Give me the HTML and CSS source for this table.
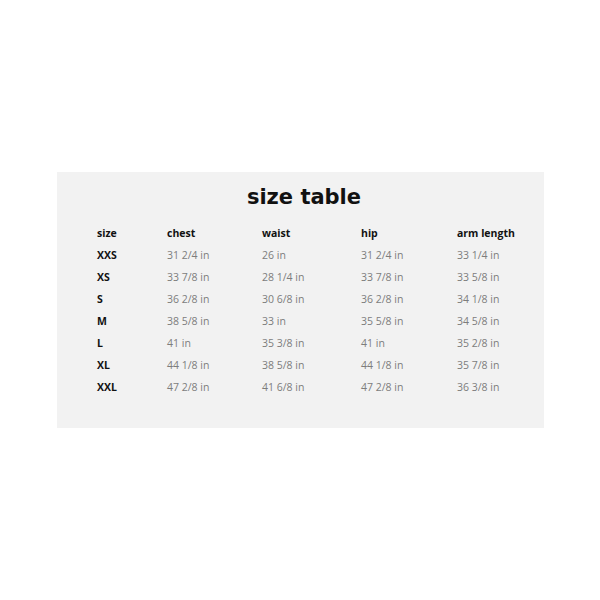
FILE: index.html
```html
<!DOCTYPE html>
<html>
<head>
<meta charset="utf-8">
<link rel="stylesheet" href="styles.css">
</head>
<body>
<section class="panel">
  <h1 class="title">size table</h1>
  <table class="sizes">
    <colgroup>
      <col class="c1"><col class="c2"><col class="c3"><col class="c4"><col class="c5">
    </colgroup>
    <thead>
      <tr><th>size</th><th>chest</th><th>waist</th><th>hip</th><th>arm length</th></tr>
    </thead>
    <tbody>
      <tr><th>XXS</th><td>31 2/4 in</td><td>26 in</td><td>31 2/4 in</td><td>33 1/4 in</td></tr>
      <tr><th>XS</th><td>33 7/8 in</td><td>28 1/4 in</td><td>33 7/8 in</td><td>33 5/8 in</td></tr>
      <tr><th>S</th><td>36 2/8 in</td><td>30 6/8 in</td><td>36 2/8 in</td><td>34 1/8 in</td></tr>
      <tr><th>M</th><td>38 5/8 in</td><td>33 in</td><td>35 5/8 in</td><td>34 5/8 in</td></tr>
      <tr><th>L</th><td>41 in</td><td>35 3/8 in</td><td>41 in</td><td>35 2/8 in</td></tr>
      <tr><th>XL</th><td>44 1/8 in</td><td>38 5/8 in</td><td>44 1/8 in</td><td>35 7/8 in</td></tr>
      <tr><th>XXL</th><td>47 2/8 in</td><td>41 6/8 in</td><td>47 2/8 in</td><td>36 3/8 in</td></tr>
    </tbody>
  </table>
</section>
</body>
</html>
```
FILE: styles.css
```css
html, body {
  margin: 0;
  padding: 0;
  background: #ffffff;
}
body {
  font-family: "Open Sans", "DejaVu Sans", sans-serif;
  padding-top: 172px;
}
.panel {
  margin-left: 57px;
  width: 487px;
  height: 256px;
  background: #f2f2f2;
  box-sizing: border-box;
  padding: 10px 0 0 40px;
}
.title {
  margin: 0 0 10px 0;
  width: 414px;
  text-align: center;
  font-family: "DejaVu Sans", sans-serif;
  font-weight: bold;
  font-size: 21px;
  line-height: 30px;
  color: #111;
}
.sizes {
  border-collapse: collapse;
  table-layout: fixed;
  width: 420px;
}
.c1 { width: 70px; }
.c2 { width: 95px; }
.c3 { width: 99px; }
.c4 { width: 96px; }
.c5 { width: 60px; }
.sizes th, .sizes td {
  padding: 0;
  height: 22px;
  text-align: left;
  line-height: 22px;
  white-space: nowrap;
}
.sizes th {
  font-size: 10.5px;
  font-weight: 700;
  color: #111;
}
.sizes td {
  font-size: 10.5px;
  font-weight: 400;
  color: #7d7d7d;
}
```
